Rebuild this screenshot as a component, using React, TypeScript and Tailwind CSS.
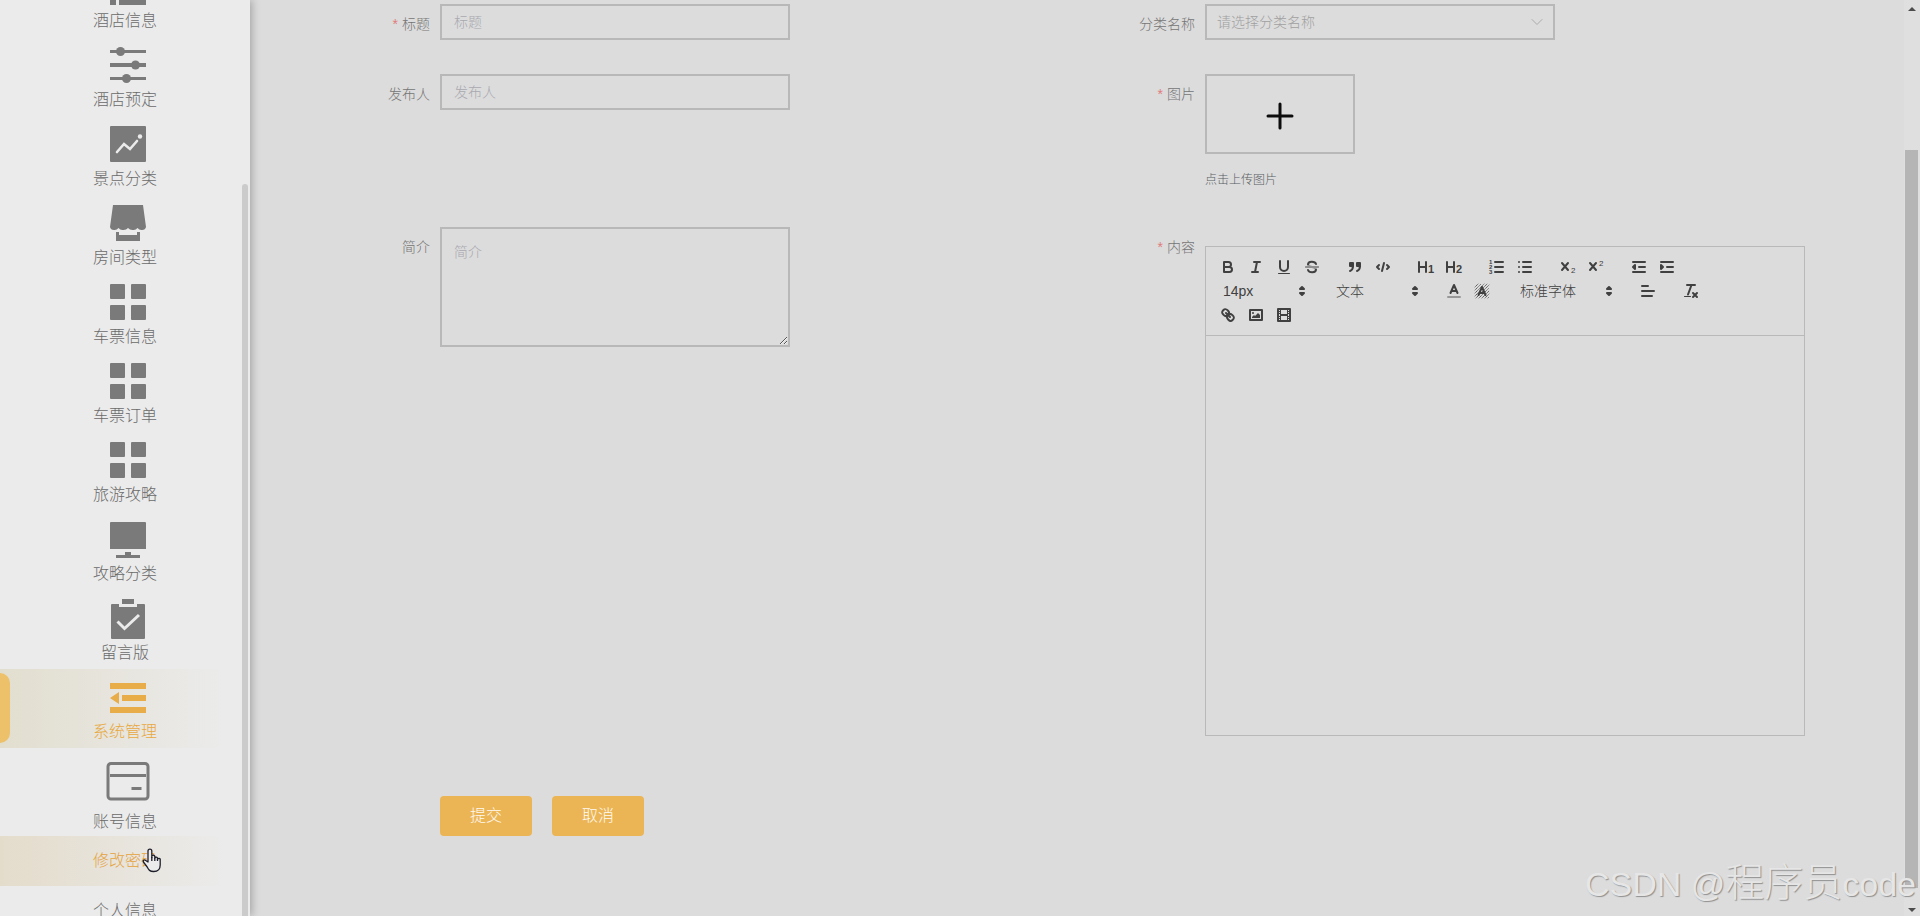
import type { ReactNode } from "react";
import { ChevronDown } from "lucide-react";

function GridIcon() {
  return (
    <>
      <rect x="6" y="6" width="15" height="15" rx="1" />
      <rect x="27" y="6" width="15" height="15" rx="1" />
      <rect x="6" y="27" width="15" height="15" rx="1" />
      <rect x="27" y="27" width="15" height="15" rx="1" />
    </>
  );
}

const menu: { title: string; icon: ReactNode; active?: boolean }[] = [
  {
    title: "酒店信息",
    icon: <path d="M6 6h6v9H6zM15 6h27v9H15zM6 20h6v9H6zM15 20h27v9H15zM6 34h6v9H6zM15 34h27v9H15z" />,
  },
  {
    title: "酒店预定",
    icon: (
      <>
        <path d="M6 9h36v3H6zM6 22h36v4H6zM6 36h36v3H6z" />
        <circle cx="16.500" cy="10.500" r="4.500" />
        <circle cx="31.500" cy="24" r="4.500" />
        <circle cx="22.500" cy="37.500" r="4.500" />
      </>
    ),
  },
  {
    title: "景点分类",
    icon: (
      <>
        <rect x="6" y="6" width="36" height="36" rx="1" />
        <path d="M13 32l7-8 6 5 7-8" fill="none" stroke="#ebebeb" strokeWidth="2.600" strokeLinecap="round" />
        <circle cx="36" cy="16.500" r="2.200" fill="#ebebeb" />
      </>
    ),
  },
  {
    title: "房间类型",
    icon: (
      <>
        <path d="M9 6h30l3 22a4 4 0 0 1-4 3 5 5 0 0 1-4.500-2A5 5 0 0 1 29 31a6 6 0 0 1-5-2 6 6 0 0 1-5 2 5 5 0 0 1-4.500-2A5 5 0 0 1 10 31a4 4 0 0 1-4-3z" />
        <path d="M12 33h3v3h18v-3h3v9H12z" />
      </>
    ),
  },
  { title: "车票信息", icon: <GridIcon /> },
  { title: "车票订单", icon: <GridIcon /> },
  { title: "旅游攻略", icon: <GridIcon /> },
  {
    title: "攻略分类",
    icon: <path d="M7 7h34a1 1 0 0 1 1 1v26H6V8a1 1 0 0 1 1-1zM21 37h6v3h9v3H12v-3h9z" />,
  },
  {
    title: "留言版",
    icon: (
      <>
        <path d="M18 5h12v5H18zM8 10h7v3h18v-3h7a1 1 0 0 1 1 1v33a1 1 0 0 1-1 1H8a1 1 0 0 1-1-1V11a1 1 0 0 1 1-1z" />
        <path d="M13.500 27.500l7 7L35 21" fill="none" stroke="#ebebeb" strokeWidth="3" />
      </>
    ),
  },
  {
    title: "系统管理",
    active: true,
    icon: <path d="M6 10h36v6H6zM18 22h24v6H18zM6 34h36v6H6zM6 25l9-6v12z" />,
  },
];

function Sidebar() {
  return (
    <aside className="relative z-10 h-full w-[250px] shrink-0 overflow-hidden bg-[#ebebeb] shadow-[2px_0_8px_rgba(0,0,0,0.25)]">
      <nav className="-mt-[42px] text-base leading-[22px] text-[#6a6a6a]">
        {menu.map((item) => (
          <a
            key={item.title}
            href="#"
            className={`relative flex h-[79px] flex-col items-center pt-1 ${
              item.active ? "bg-linear-to-r from-[#e2decf] to-[#ebebeb] to-90% text-[#e8a840]" : ""
            }`}
          >
            {item.active && (
              <span className="absolute left-0 top-1 h-[70px] w-[10px] rounded-r-[10px] bg-[#edc06a]" />
            )}
            <svg
              viewBox="0 0 48 48"
              fill="currentColor"
              className={`ml-[6px] size-12 shrink-0 ${item.active ? "text-[#e8ac49]" : "text-[#7a7a7a]"}`}
            >
              {item.icon}
            </svg>
            <span>{item.title}</span>
          </a>
        ))}

        {/* expanded submenu */}
        <a href="#" className="flex h-[88px] flex-col items-center gap-[6px] pt-[9px]">
          <svg
            viewBox="0 0 48 48"
            fill="none"
            stroke="currentColor"
            strokeWidth="3"
            className="ml-[6px] size-12 shrink-0 text-[#7a7a7a]"
          >
            <rect x="4" y="6.500" width="40" height="35.500" rx="3" />
            <path d="M6 18.500h36M27.500 31.500h10" />
          </svg>
          <span>账号信息</span>
        </a>
        <a
          href="#"
          className="relative flex h-[50px] items-center justify-center bg-linear-to-r from-[#e4dccb] to-[#ebebeb] to-90% text-[#e5a23c]"
        >
          修改密码
          <svg
            viewBox="0 0 19 25"
            className="absolute left-[142px] top-3 h-[25px] w-[19px]"
            fill="#ececec"
            stroke="#1e1e2a"
            strokeWidth="1.300"
            strokeLinejoin="round"
          >
            <path d="M6 14V3a1.900 1.900 0 0 1 3.800 0v6.500-1a1.500 1.500 0 0 1 3 .5v1a1.400 1.400 0 0 1 2.700.4v1a1.300 1.300 0 0 1 2.700.6v5c0 4-2 6.500-6.500 6.500-4 0-5-1.500-6.500-4.500L1.400 14c-.8-1.700 1-2.800 2.300-1.500z" />
            <path d="M9.800 9v4M12.800 10v3M15.500 11v2" />
          </svg>
        </a>
        <a href="#" className="flex h-[50px] items-center justify-center">
          个人信息
        </a>
      </nav>
      <div className="absolute bottom-0 right-[2px] top-[184px] w-[6px] rounded-t-full bg-[#cbcbcb]" />
    </aside>
  );
}

function Field({
  label,
  id,
  required,
  children,
}: {
  label: string;
  id: string;
  required?: boolean;
  children: ReactNode;
}) {
  return (
    <div className="flex items-start">
      <label htmlFor={id} className="w-[160px] shrink-0 pr-[10px] text-right text-sm leading-10 text-[#757575]">
        {required && <span className="mr-1 text-[#e07c7c]">*</span>}
        {label}
      </label>
      {children}
    </div>
  );
}

function Tool({ name, children }: { name: string; children: ReactNode }) {
  return (
    <button type="button" aria-label={name} className="h-6 w-7 px-[5px] py-[3px]">
      <svg
        viewBox="0 0 18 18"
        className="size-[18px]"
        fill="none"
        stroke="currentColor"
        strokeWidth="2"
        strokeLinecap="round"
        strokeLinejoin="round"
      >
        {children}
      </svg>
    </button>
  );
}

function Group({ children }: { children: ReactNode }) {
  return <div className="mr-[15px] flex">{children}</div>;
}

function Picker({ name, value, className }: { name: string; value: string; className: string }) {
  return (
    <div className={`relative mr-[15px] h-6 ${className}`}>
      <select aria-label={name} className="size-full appearance-none bg-transparent pl-[9px] text-sm leading-6">
        <option>{value}</option>
      </select>
      <svg
        viewBox="0 0 18 18"
        className="pointer-events-none absolute right-px top-[3px] size-[18px]"
        fill="currentColor"
        stroke="currentColor"
        strokeWidth="2"
        strokeLinejoin="round"
      >
        <polygon points="7 11 9 13 11 11" />
        <polygon points="7 7 9 5 11 7" />
      </svg>
    </div>
  );
}

function SvgText({
  x,
  y,
  size,
  weight = 700,
  children,
}: {
  x: number;
  y: number;
  size: number;
  weight?: number;
  children: ReactNode;
}) {
  return (
    <text x={x} y={y} fontSize={size} fontWeight={weight} fill="currentColor" stroke="none">
      {children}
    </text>
  );
}

function Editor() {
  return (
    <div className="mt-[19px] w-[600px] shrink-0 border border-[#b9b9b9]">
      <div className="border-b border-[#b9b9b9] p-2 text-[#404040]">
        <div className="flex">
          <Group>
            <Tool name="加粗">
              <path d="M5 4h4.500a2.500 2.500 0 0 1 0 5H5zM5 9h5.500a2.500 2.500 0 0 1 0 5H5z" />
            </Tool>
            <Tool name="斜体">
              <path d="M7 4h6M5 14h6M8 14l2-10" />
            </Tool>
            <Tool name="下划线">
              <path d="M5 3v6a4 4 0 0 0 8 0V3" />
              <path d="M3.500 15.500h11" strokeWidth="1" />
            </Tool>
            <Tool name="删除线">
              <path d="M13 6C12 3 5 3 5 6.500S13 8 13 11.500 6 15 5 12" />
              <path d="M2.500 9h13" strokeWidth="3" stroke="#dcdcdc" />
              <path d="M2.500 9h13" strokeWidth="1" />
            </Tool>
          </Group>
          <Group>
            <Tool name="引用">
              <path d="M4 5h3v3H4zM11 5h3v3h-3z" fill="currentColor" />
              <path d="M7 8c0 4-3 5-3 5M14 8c0 4-3 5-3 5" />
            </Tool>
            <Tool name="代码">
              <path d="M5 7L3 9l2 2M13 7l2 2-2 2M10 5l-2 8" />
            </Tool>
          </Group>
          <Group>
            <Tool name="标题一">
              <path d="M2 4v10M9 4v10M2 9h7" />
              <SvgText x={11} y={15} size={11}>1</SvgText>
            </Tool>
            <Tool name="标题二">
              <path d="M2 4v10M9 4v10M2 9h7" />
              <SvgText x={11} y={15} size={11}>2</SvgText>
            </Tool>
          </Group>
          <Group>
            <Tool name="有序列表">
              <path d="M7 4h8M7 9h8M7 14h8" />
              <SvgText x={1} y={6} size={6}>1</SvgText>
              <SvgText x={1} y={11} size={6}>2</SvgText>
              <SvgText x={1} y={16} size={6}>3</SvgText>
            </Tool>
            <Tool name="无序列表">
              <path d="M7 4h8M7 9h8M7 14h8M3 4h0M3 9h0M3 14h0" />
            </Tool>
          </Group>
          <Group>
            <Tool name="下标">
              <path d="M3 5l6 7M9 5l-6 7" />
              <SvgText x={12} y={15} size={8} weight={400}>2</SvgText>
            </Tool>
            <Tool name="上标">
              <path d="M3 5l6 7M9 5l-6 7" />
              <SvgText x={12} y={8} size={8} weight={400}>2</SvgText>
            </Tool>
          </Group>
          <Group>
            <Tool name="减少缩进">
              <path d="M3 4h12M3 14h12M9 9h6" />
              <path d="M5 7v4L3 9z" fill="currentColor" />
            </Tool>
            <Tool name="增加缩进">
              <path d="M3 4h12M3 14h12M9 9h6" />
              <path d="M3 7v4l2-2z" fill="currentColor" />
            </Tool>
          </Group>
        </div>
        <div className="flex">
          <Picker name="字号" value="14px" className="w-[98px]" />
          <Picker name="段落" value="文本" className="w-[98px]" />
          <Group>
            <Tool name="文字颜色">
              <path d="M5.500 11L9 3l3.500 8M7 9h4" />
              <path d="M3 15h12" stroke="#989898" />
            </Tool>
            <Tool name="背景颜色">
              <path
                d="M2 5l3-3M2 8l6-6M2 11l9-9M2 14l12-12M3 16L16 3M6 16L16 6M9 16l7-7M12 16l4-4M15 16l1-1"
                strokeWidth="0.800"
                strokeDasharray="0.600 1.200"
              />
              <path d="M5.500 13L9 5l3.500 8M7 11h4" />
            </Tool>
          </Group>
          <Picker name="字体" value="标准字体" className="w-[108px]" />
          <Group>
            <Tool name="对齐">
              <path d="M3 4h6M3 9h12M3 14h10" />
            </Tool>
          </Group>
          <Group>
            <Tool name="清除格式">
              <path d="M5 3h8M6 12.500L9.500 3M11 11l4 4M15 11l-4 4" />
              <path d="M2.500 14.500h6" strokeWidth="1" />
            </Tool>
          </Group>
        </div>
        <div className="flex">
          <Tool name="链接">
            <path d="M7 7l4 4M8.900 4.577a3.476 3.476 0 0 1 .36 4.679A3.476 3.476 0 0 1 4.577 8.900C3.185 7.500 2.035 6.400 4.217 4.217S7.500 3.185 8.900 4.577ZM13.423 9.100a3.476 3.476 0 0 0-4.679-.36 3.476 3.476 0 0 0 .36 4.679c1.392 1.392 2.500 2.542 4.679.36S14.815 10.500 13.423 9.100Z" />
          </Tool>
          <Tool name="图片">
            <rect x="3" y="4" width="12" height="10" />
            <circle cx="6" cy="7" r="1" fill="currentColor" stroke="none" />
            <path d="M5 12v-1l2-2 1 1 3-3 2 2v3z" fill="currentColor" stroke="none" />
          </Tool>
          <Tool name="视频">
            <rect x="3" y="3" width="12" height="12" />
            <path
              d="M5 3h1v12H5zM12 3h1v12h-1zM5 8h8v2H5zM3 5h3v1H3zM3 7h3v1H3zM3 10h3v1H3zM3 12h3v1H3zM12 5h3v1h-3zM12 7h3v1h-3zM12 10h3v1h-3zM12 12h3v1h-3z"
              fill="currentColor"
              stroke="none"
            />
          </Tool>
        </div>
      </div>
      <textarea id="content" className="block h-[399px] w-full resize-none bg-transparent p-3 text-sm outline-none" />
    </div>
  );
}

const control =
  "w-[350px] shrink-0 border-2 border-[#b8b8b8] bg-transparent text-sm outline-none placeholder:text-[#a9a9b0]";

export default function App() {
  return (
    <div className="relative flex h-screen overflow-hidden bg-[#dcdcdc] font-['Liberation_Sans','Noto_Sans_CJK_SC',sans-serif] font-light">
      <Sidebar />

      <main className="min-w-0 flex-1 overflow-hidden pl-[30px] pr-[94px] pt-1">
        <form>
          <div className="grid grid-cols-2">
            <div className="h-[70px]">
              <Field label="标题" id="title" required>
                <input id="title" placeholder="标题" className={`h-9 px-3 ${control}`} />
              </Field>
            </div>
            <div className="h-[70px]">
              <Field label="分类名称" id="category">
                <div className="relative">
                  <select id="category" className={`h-9 appearance-none px-[10px] text-[#a0a0a0] ${control}`}>
                    <option>请选择分类名称</option>
                  </select>
                  <ChevronDown
                    className="pointer-events-none absolute right-2 top-2 size-5 text-[#acacac]"
                    strokeWidth={1.2}
                  />
                </div>
              </Field>
            </div>

            <div className="h-[153px]">
              <Field label="发布人" id="publisher">
                <input id="publisher" placeholder="发布人" className={`h-9 px-3 ${control}`} />
              </Field>
            </div>
            <div className="h-[153px]">
              <Field label="图片" id="picture" required>
                <div>
                  <button
                    id="picture"
                    type="button"
                    aria-label="上传图片"
                    className="flex h-20 w-[150px] items-center justify-center border-2 border-[#b8b8b8] pt-1"
                  >
                    <svg viewBox="0 0 28 28" className="size-7" stroke="#0c0c0c" strokeWidth="3" strokeLinecap="round">
                      <path d="M14 2v24M2 14h24" />
                    </svg>
                  </button>
                  <p className="mt-4 text-xs leading-5 text-[#5a5e62]">点击上传图片</p>
                </div>
              </Field>
            </div>

            <Field label="简介" id="intro">
              <textarea id="intro" placeholder="简介" className={`h-[120px] px-3 py-[13px] ${control}`} />
            </Field>
            <Field label="内容" id="content" required>
              <Editor />
            </Field>
          </div>

          <div className="mt-[60px] flex gap-5 pl-[160px] text-base text-[#fffaf2]">
            <button type="submit" className="h-10 w-[92px] rounded bg-[#ebb555]">
              提交
            </button>
            <button type="button" className="h-10 w-[92px] rounded bg-[#ebb555]">
              取消
            </button>
          </div>
        </form>
      </main>

      {/* page scrollbar */}
      <div className="flex w-4 shrink-0 flex-col justify-between bg-[#dfdfdf]">
        <svg viewBox="0 0 16 16" className="size-4 shrink-0" fill="#4c4c4c">
          <path d="M4 11l4-4 4 4z" />
        </svg>
        <div className="ml-px mt-[134px] w-[13px] flex-1 bg-[#b5b5b5]" />
        <svg viewBox="0 0 16 16" className="mt-3 size-4 shrink-0" fill="#4c4c4c">
          <path d="M4 8l4 4 4-4z" />
        </svg>
      </div>

      <div className="pointer-events-none absolute bottom-1 right-1 z-20 whitespace-nowrap text-[34px] leading-[56px] text-[#e6e6e6] [text-shadow:1px_1px_1px_#909090]">
        CSDN @<span className="text-[39px]">程序员</span>code
      </div>
    </div>
  );
}
